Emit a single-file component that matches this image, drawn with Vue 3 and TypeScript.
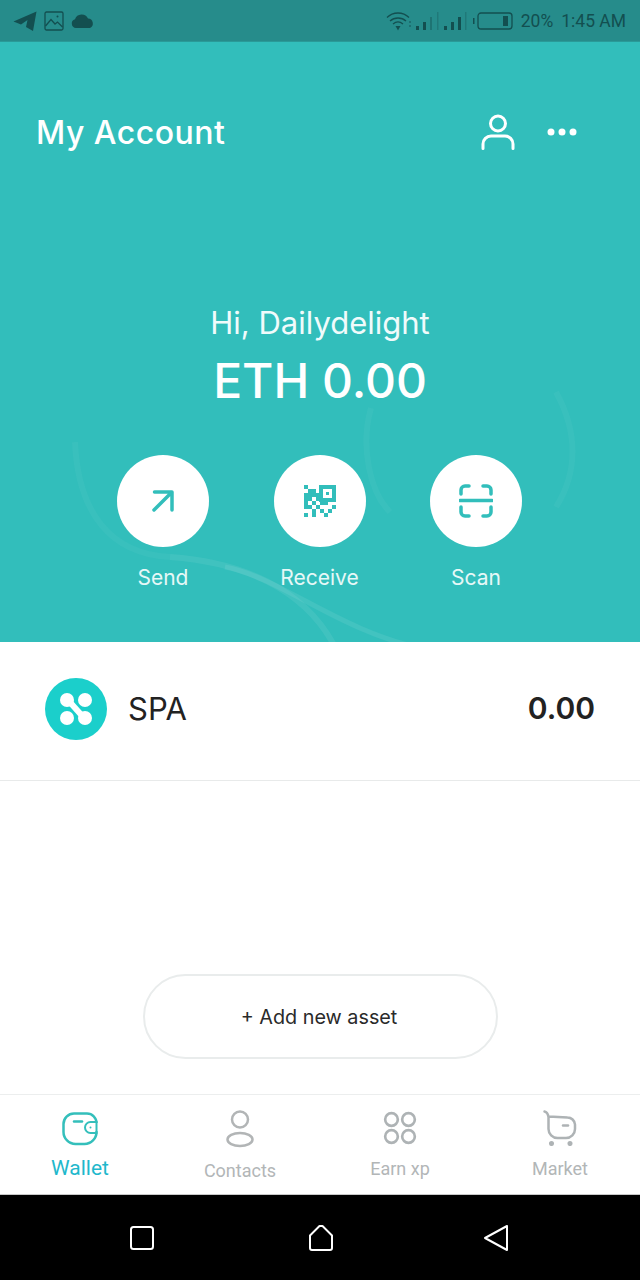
<template>
  <div class="screen">
    <div class="status-bar">
      <div class="status-left">
        <svg width="24" height="20" viewBox="0 0 24 20"><path d="M0.500 10.500 23.500 0.500 20 20 13 16 14.500 9 8 13.500 Z" fill="#134f50" /></svg>
        <svg width="20" height="20" viewBox="0 0 20 20" fill="none" stroke="#134f50" stroke-width="1.300">
          <rect x="1" y="1" width="18" height="18" rx="1.500" />
          <path d="M1.500 15 7 8.500 11 13 13.500 11 18.500 16" />
          <circle cx="13.500" cy="5.500" r="1" fill="#134f50" stroke="none" />
        </svg>
        <svg width="24" height="14" viewBox="0 0 24 14"><path d="M5 14a4.500 4.500 0 0 1-1-8.800A7 7 0 0 1 17 4.500a5 5 0 0 1 2 9.500Z" fill="#134f50" /></svg>
      </div>
      <div class="status-right">
        <svg width="25" height="20" viewBox="0 0 25 20" fill="none" stroke="#134f50" stroke-width="1.300">
          <path d="M1 6.500C7 .5 17 .5 23 6.500M4 10c4.500-4 11.500-4 16 0M7 13c3-2.500 7-2.500 10 0" />
          <path d="M9.500 15h5L12 19.500Z" fill="#134f50" stroke="none" />
          <circle cx="24" cy="11" r=".8" fill="#134f50" stroke="none" />
          <circle cx="24" cy="15" r=".8" fill="#134f50" stroke="none" />
        </svg>
        <svg width="23" height="18" viewBox="0 0 23 18">
          <rect x="0" y="14" width="3" height="4" fill="#134f50" />
          <rect x="7" y="10" width="3" height="8" fill="#134f50" />
          <rect x="14" y="5" width="2" height="13" fill="#134f50" opacity=".4" />
          <rect x="21" y="0" width="1.500" height="18" fill="#134f50" opacity=".3" />
        </svg>
        <svg width="23" height="18" viewBox="0 0 23 18">
          <rect x="0" y="14" width="3" height="4" fill="#134f50" />
          <rect x="7" y="10" width="3" height="8" fill="#134f50" />
          <rect x="14" y="5" width="3" height="13" fill="#134f50" />
          <rect x="21" y="0" width="1.500" height="18" fill="#134f50" opacity=".3" />
        </svg>
        <svg width="41" height="18" viewBox="0 0 41 18" fill="none">
          <rect x="6" y="1" width="34" height="16" rx="3" stroke="#134f50" stroke-width="1.300" />
          <rect x="1" y="6" width="1.500" height="6" fill="#134f50" />
          <rect x="31" y="4" width="5" height="10" fill="#134f50" />
        </svg>
        <span class="status-text pct">20%</span>
        <span class="status-text">1:45 AM</span>
      </div>
    </div>

    <section class="hero">
      <svg class="hero-curves" width="640" height="600" viewBox="0 0 640 600" fill="none" stroke="#fff">
        <path d="M75 400C78 470 110 512 170 515" stroke-width="6" stroke-opacity=".035" />
        <path d="M170 515C240 520 305 545 336 607" stroke-width="6" stroke-opacity=".07" />
        <path d="M225 525C280 535 340 590 425 607" stroke-width="5" stroke-opacity=".08" />
        <path d="M371 366C360 405 370 450 390 470" stroke-width="6" stroke-opacity=".035" />
        <path d="M556 350C578 390 578 430 556 465" stroke-width="6" stroke-opacity=".035" />
      </svg>
      <header class="hero-top">
        <h1>My Account</h1>
        <div class="hero-icons">
          <svg width="34" height="36" viewBox="0 0 34 36" fill="none" stroke="#fff" stroke-width="3" stroke-linecap="round">
            <circle cx="17" cy="9.500" r="7.500" />
            <path d="M2 34.500V30a8 8 0 0 1 8-8h14a8 8 0 0 1 8 8v4.500" />
          </svg>
          <svg width="30" height="8" viewBox="0 0 30 8" fill="#fff">
            <circle cx="4" cy="4" r="3.500" />
            <circle cx="15" cy="4" r="3.500" />
            <circle cx="26" cy="4" r="3.500" />
          </svg>
        </div>
      </header>
      <p class="greeting">Hi, Dailydelight</p>
      <p class="balance">ETH 0.00</p>
      <div class="actions">
        <div v-for="a in actions" :key="a" class="action">
          <div class="action-circle">
            <svg v-if="a === 'Send'" width="24" height="24" viewBox="0 0 24 24" fill="none" stroke="#32bebb" stroke-width="3.500" stroke-linecap="round" stroke-linejoin="round">
              <path d="M3.500 3H21V21M20 4 3 21" />
            </svg>
            <svg v-else-if="a === 'Receive'" width="32" height="32" viewBox="0 0 32 32" fill="#32bebb" shape-rendering="crispEdges">
              <path fill-rule="evenodd" d="M15 0h17v17H15ZM19 4v9h9V4Z" />
              <rect x="22" y="7" width="3" height="3" />
              <rect v-for="(c, i) in qrCells" :key="i" :x="c[0] * 4" :y="c[1] * 4" width="4" height="4" />
            </svg>
            <svg v-else width="34" height="34" viewBox="0 0 34 34" fill="none" stroke="#32bebb" stroke-width="3.500" stroke-linecap="round">
              <path d="M10 2H6a4 4 0 0 0-4 4v4M24 2h4a4 4 0 0 1 4 4v4M10 32H6a4 4 0 0 1-4-4v-5M24 32h4a4 4 0 0 0 4-4v-5" />
              <path d="M1 16.500H33" />
            </svg>
          </div>
          <span class="action-label">{{ a }}</span>
        </div>
      </div>
    </section>

    <main class="content">
      <div class="asset-row">
        <svg width="62" height="62" viewBox="0 0 62 62">
          <circle cx="31" cy="31" r="31" fill="#1bcfcb" />
          <path d="M23 22 39 40" stroke="#fff" stroke-width="6" />
          <circle cx="22" cy="22" r="7" fill="#fff" />
          <circle cx="40" cy="22" r="7" fill="#fff" />
          <circle cx="22" cy="40" r="7" fill="#fff" />
          <circle cx="40" cy="40" r="7" fill="#fff" />
        </svg>
        <span class="asset-name">SPA</span>
        <span class="asset-value">0.00</span>
      </div>
      <div class="add-wrap">
        <button class="add-btn">+ Add new asset</button>
      </div>
    </main>

    <nav class="tabbar">
      <div class="tab tab-wallet">
        <svg width="36" height="34" viewBox="0 0 36 34" fill="none" stroke="#34bfbb" stroke-width="2.500" stroke-linecap="round">
          <path d="M34.500 10.500V11A9.500 9.500 0 0 0 25 1.500H12A10.500 10.500 0 0 0 1.500 12v8A12 12 0 0 0 13.500 32h9A12 12 0 0 0 34.500 20v0" />
          <path d="M12 9.500h8" />
          <path d="M34.500 10h-6a5.500 5.500 0 0 0 0 11h6Z" stroke-width="2" />
          <circle cx="28.500" cy="15.500" r="1" fill="#34bfbb" stroke="none" />
        </svg>
        <span>Wallet</span>
      </div>
      <div class="tab tab-contacts">
        <svg width="28" height="38" viewBox="0 0 28 38" fill="none" stroke="#b2b5b6" stroke-width="2.500">
          <circle cx="14" cy="9.500" r="8" />
          <ellipse cx="14" cy="29.500" rx="12.500" ry="6.500" />
        </svg>
        <span>Contacts</span>
      </div>
      <div class="tab tab-earn">
        <svg width="34" height="34" viewBox="0 0 36 36" fill="none" stroke="#aeb3b5" stroke-width="2.800">
          <circle cx="9" cy="9" r="6.700" />
          <circle cx="27" cy="9" r="6.700" />
          <circle cx="9" cy="27" r="6.700" />
          <circle cx="27" cy="27" r="6.700" />
        </svg>
        <span>Earn xp</span>
      </div>
      <div class="tab tab-market">
        <svg width="34" height="36" viewBox="0 0 34 36" fill="none" stroke="#aeb3b5" stroke-width="2.500" stroke-linecap="round">
          <path d="M1.500 1.500C4.500 2 5 4 5.500 7V19A9 9 0 0 0 14.500 28H23A9 9 0 0 0 32 19V14.500A7.500 7.500 0 0 0 24.500 7.500L5.500 6.500" />
          <path d="M20 15.500h5" />
          <circle cx="8.500" cy="33.500" r="1.300" fill="#aeb3b5" />
          <circle cx="27" cy="33.500" r="1.300" fill="#aeb3b5" />
        </svg>
        <span>Market</span>
      </div>
    </nav>

    <footer class="nav-bar">
      <svg width="24" height="24" viewBox="0 0 24 24" fill="none" stroke="#fff" stroke-width="2"><rect x="1" y="1" width="22" height="22" rx="2.500" /></svg>
      <svg class="nav-home" width="24" height="26" viewBox="0 0 24 26" fill="none" stroke="#fff" stroke-width="2" stroke-linejoin="round"><path d="M1 10.500 10.500 1h3L23 10.500v12.500a2 2 0 0 1-2 2H3a2 2 0 0 1-2-2Z" /></svg>
      <svg width="24" height="26" viewBox="0 0 24 26" fill="none" stroke="#fff" stroke-width="2" stroke-linejoin="round"><path d="M23 1V25L1 13Z" /></svg>
    </footer>
  </div>
</template>

<script setup lang="ts">
const actions: string[] = ['Send', 'Receive', 'Scan']

// QR modules left of and below the finder block, on a 4px grid
const qrCells: [number, number][] = [
  [0, 0], [1, 1], [2, 1],
  [0, 2], [1, 2], [2, 2], [3, 2],
  [0, 3], [1, 3], [3, 3],
  [0, 4], [2, 4], [4, 4], [5, 4],
  [0, 5], [1, 5], [3, 5], [7, 5],
  [2, 6], [4, 6], [6, 6],
  [0, 7], [2, 7], [5, 7],
]
</script>

<style>
html,
body {
  margin: 0;
  background: #fff;
}
</style>

<style scoped>
.screen {
  width: 640px;
  height: 1280px;
  display: flex;
  flex-direction: column;
  overflow: hidden;
  font-family: Inter, "Liberation Sans", sans-serif;
}

.status-bar {
  height: 42px;
  box-sizing: border-box;
  flex: none;
  background: #268c8b;
  border-bottom: 1px solid #2a9a98;
  display: flex;
  justify-content: space-between;
  align-items: center;
  padding: 0 14px 0 13px;
  color: #134f50;
}

.status-left,
.status-right {
  display: flex;
  align-items: center;
}

.status-left {
  gap: 7px;
}

.status-right {
  gap: 5px;
}

.status-text {
  font-family: Roboto, sans-serif;
  font-size: 17.5px;
}

.pct {
  margin-left: 3px;
  margin-right: 3px;
}

.hero {
  position: relative;
  height: 600px;
  flex: none;
  background: #32bebb;
  color: #fff;
  display: flex;
  flex-direction: column;
  align-items: center;
}

.hero-curves {
  position: absolute;
  left: 0;
  top: 0;
}

.hero-top {
  position: relative;
  align-self: stretch;
  display: flex;
  justify-content: space-between;
  align-items: center;
  height: 38px;
  margin-top: 71px;
  padding: 0 63px 0 36px;
}

.hero-top h1 {
  margin: 0;
  font-size: 32px;
  font-weight: 500;
  letter-spacing: 0.5px;
}

.hero-icons {
  display: flex;
  align-items: center;
  gap: 32px;
}

.greeting {
  position: relative;
  margin: 153px 0 0;
  font-size: 31px;
  line-height: 38px;
  font-weight: 400;
  color: #f0fbfb;
}

.balance {
  position: relative;
  margin: 10px 0 0;
  font-size: 48px;
  line-height: 58px;
  font-weight: 500;
}

.actions {
  position: relative;
  display: flex;
  gap: 64.500px;
  margin-top: 45px;
  margin-right: 1px;
}

.action {
  width: 92px;
  display: flex;
  flex-direction: column;
  align-items: center;
  gap: 18px;
}

.action-circle {
  width: 92px;
  height: 92px;
  border-radius: 50%;
  background: #fff;
  display: flex;
  align-items: center;
  justify-content: center;
}

.action-label {
  font-size: 21px;
  line-height: 26px;
  font-weight: 400;
  color: #e6f8f7;
  white-space: nowrap;
}

.content {
  flex: 1;
  background: #fff;
  display: flex;
  flex-direction: column;
}

.asset-row {
  height: 134px;
  padding: 0 45px 4px;
  display: flex;
  align-items: center;
  border-bottom: 1px solid #e8eaea;
  color: #222;
}

.asset-name {
  margin-left: 21px;
  margin-bottom: 2px;
  font-size: 31px;
  font-weight: 400;
}

.asset-value {
  margin-left: auto;
  margin-bottom: 2px;
  font-size: 30px;
  font-weight: 600;
}

.add-wrap {
  display: flex;
  justify-content: center;
  margin-top: 193px;
}

.add-btn {
  width: 355px;
  height: 85px;
  border-radius: 43px;
  border: 2px solid #e9ecec;
  background: #fff;
  font-family: Inter, sans-serif;
  font-size: 19.800px;
  color: #2a2a2a;
  padding: 0 8px 0 6px;
}

.tabbar {
  height: 101px;
  box-sizing: border-box;
  flex: none;
  display: grid;
  grid-template-columns: repeat(4, 160px);
  background: #fff;
  border-top: 1px solid #eceeee;
  border-bottom: 1px solid #c8c8c8;
  font-family: Roboto, sans-serif;
  font-size: 18px;
  color: #b2b6b7;
}

.tab {
  display: flex;
  flex-direction: column;
  align-items: center;
}

.tab span {
  line-height: 24px;
}

.tab-wallet {
  padding-top: 17px;
  gap: 10px;
  color: #1fb8cc;
  font-size: 21px;
}

.tab-contacts {
  padding-top: 15px;
  gap: 11px;
}

.tab-earn {
  padding-top: 16px;
  gap: 12px;
}

.tab-market {
  padding-top: 15px;
  gap: 11px;
}

.nav-bar {
  height: 85px;
  flex: none;
  background: #000;
  display: flex;
  align-items: center;
  padding: 0 132px 0 130px;
  justify-content: space-between;
}

.nav-home {
  margin-left: 3px;
}
</style>
